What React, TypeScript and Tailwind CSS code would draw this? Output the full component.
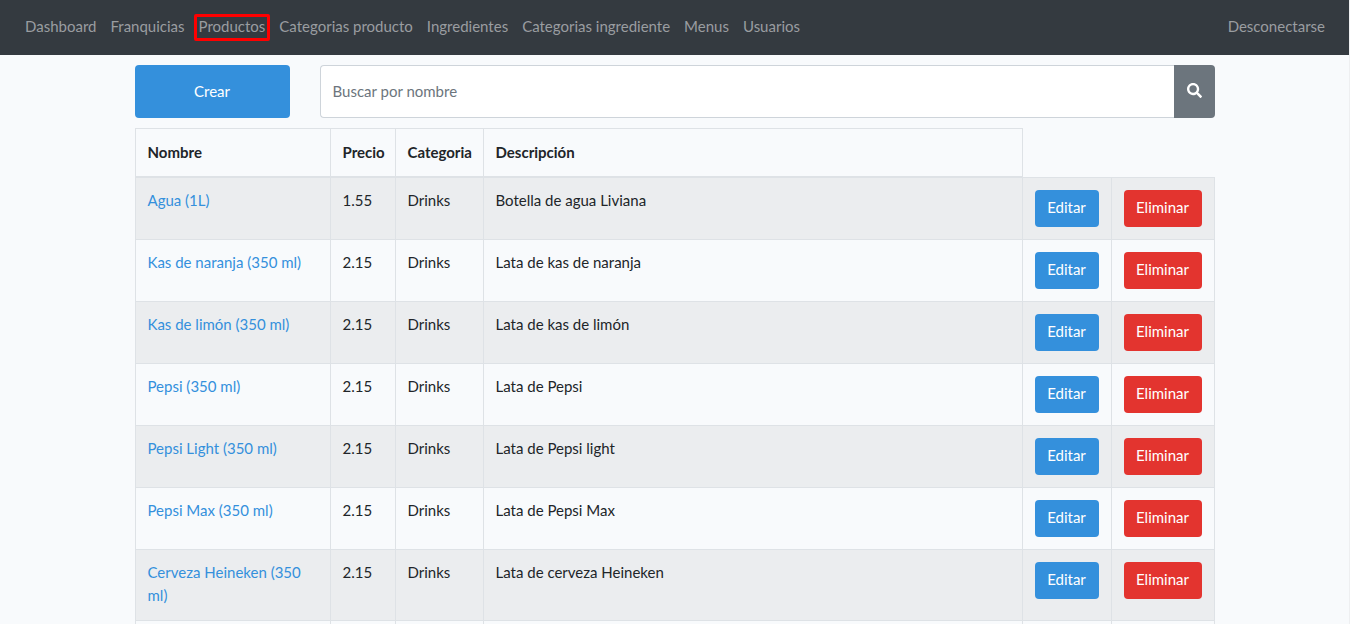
import React from 'react';
import { FaSearch } from 'react-icons/fa';

type Product = { name: string; price: string; category: string; description: string };

const products: Product[] = [
  { name: 'Agua (1L)', price: '1.55', category: 'Drinks', description: 'Botella de agua Liviana' },
  { name: 'Kas de naranja (350 ml)', price: '2.15', category: 'Drinks', description: 'Lata de kas de naranja' },
  { name: 'Kas de limón (350 ml)', price: '2.15', category: 'Drinks', description: 'Lata de kas de limón' },
  { name: 'Pepsi (350 ml)', price: '2.15', category: 'Drinks', description: 'Lata de Pepsi' },
  { name: 'Pepsi Light (350 ml)', price: '2.15', category: 'Drinks', description: 'Lata de Pepsi light' },
  { name: 'Pepsi Max (350 ml)', price: '2.15', category: 'Drinks', description: 'Lata de Pepsi Max' },
  { name: 'Cerveza Heineken (350 ml)', price: '2.15', category: 'Drinks', description: 'Lata de cerveza Heineken' },
];

const sections = [
  'Dashboard',
  'Franquicias',
  'Productos',
  'Categorias producto',
  'Ingredientes',
  'Categorias ingrediente',
  'Menus',
  'Usuarios',
];

const headings = ['Nombre', 'Precio', 'Categoria', 'Descripción'];

const textCell = 'border border-[#dee2e6] px-3 pt-[11px] pb-[13px]';
const actionCell = 'border border-[#dee2e6] p-3';

function NavLink({ label, marked = false }: { label: string; marked?: boolean }) {
  return (
    <a href="#" className="relative block px-[7px] pt-[7px] pb-[9px] text-[#9a9da0]">
      {label}
      {marked && (
        <span className="pointer-events-none absolute inset-x-0.5 inset-y-1.5 rounded-xs border-3 border-[#ff0000]" />
      )}
    </a>
  );
}

export default function App() {
  return (
    <div className="min-h-screen border-r border-[#eeeff1] bg-[#f8fafc] font-['Lato',sans-serif] text-[15px] leading-[23px] text-[#212529]">
      <nav className="flex items-center justify-between bg-[#343a40] pr-[17px] pl-[18px] py-2">
        <div className="flex">
          {sections.map((label) => (
            <NavLink key={label} label={label} marked={label === 'Productos'} />
          ))}
        </div>
        <NavLink label="Desconectarse" />
      </nav>

      <main className="mx-auto max-w-[1080px]">
        <div className="flex gap-[30px] py-2.5">
          <button type="button" className="w-[155px] rounded bg-[#3490dc] text-white">
            Crear
          </button>
          <form className="flex h-[53px] flex-1" onSubmit={(event) => event.preventDefault()}>
            <input
              type="text"
              aria-label="Buscar por nombre"
              placeholder="Buscar por nombre"
              className="min-w-0 flex-1 rounded-l border border-r-0 border-[#ced4da] bg-white px-3 outline-none placeholder:text-[#6c757d]"
            />
            <button
              type="submit"
              aria-label="Buscar"
              className="flex w-[41px] items-center justify-center rounded-r bg-[#6c757d] pb-0.5 text-white"
            >
              <FaSearch size={15} />
            </button>
          </form>
        </div>

        <table className="w-full table-fixed border-collapse text-left">
          <colgroup>
            <col className="w-[195px]" />
            <col className="w-[65px]" />
            <col className="w-[88px]" />
            <col />
            <col className="w-[89px]" />
            <col className="w-[103px]" />
          </colgroup>
          <thead>
            <tr>
              {headings.map((heading) => (
                <th key={heading} scope="col" className="border border-b-2 border-[#dee2e6] p-3 font-bold">
                  {heading}
                </th>
              ))}
            </tr>
          </thead>
          <tbody>
            {products.map((product) => (
              <tr key={product.name} className="align-top odd:bg-[#ebedef]">
                <td className={textCell}>
                  <a href="#" className="text-[#3490dc]">
                    {product.name}
                  </a>
                </td>
                <td className={textCell}>{product.price}</td>
                <td className={textCell}>{product.category}</td>
                <td className={textCell}>{product.description}</td>
                <td className={actionCell}>
                  <button type="button" className="block h-[37px] w-full rounded bg-[#3490dc] pb-0.5 text-white">
                    Editar
                  </button>
                </td>
                <td className={actionCell}>
                  <button type="button" className="block h-[37px] w-full rounded bg-[#e3342f] pb-0.5 text-white">
                    Eliminar
                  </button>
                </td>
              </tr>
            ))}
            <tr className="h-1">
              {[...headings, 'Editar', 'Eliminar'].map((column) => (
                <td key={column} className="border border-b-0 border-[#dee2e6]" />
              ))}
            </tr>
          </tbody>
        </table>
      </main>
    </div>
  );
}
